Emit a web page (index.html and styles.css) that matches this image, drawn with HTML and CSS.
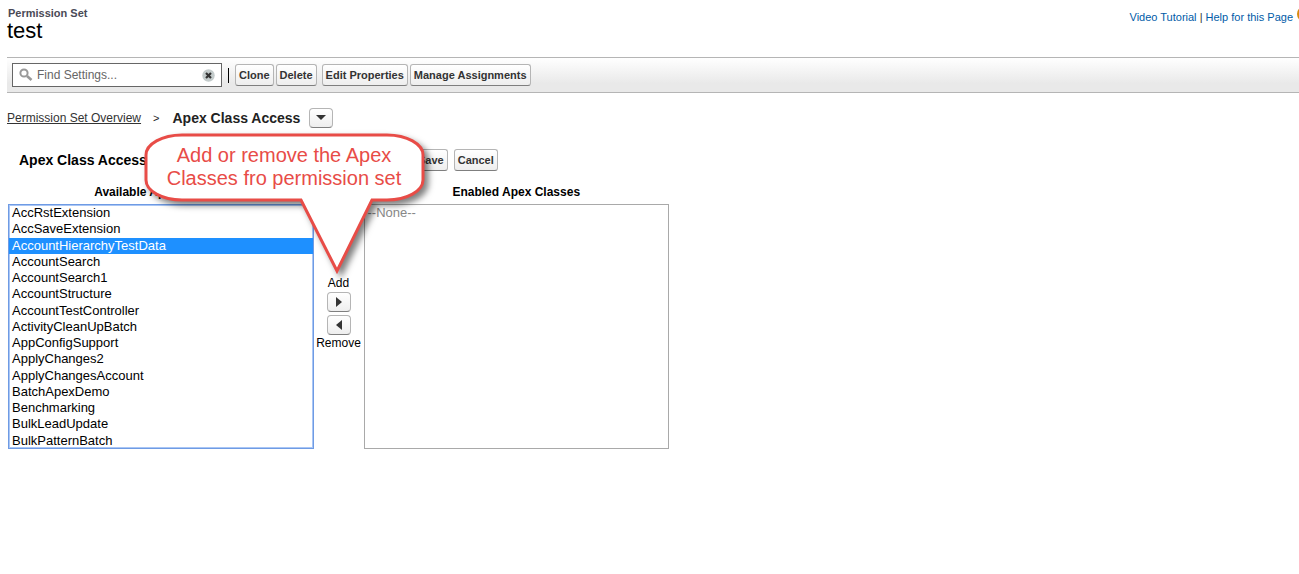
FILE: index.html
```html
<!DOCTYPE html>
<html lang="en">
<head>
    <meta charset="UTF-8">
    <meta name="viewport" content="width=device-width, initial-scale=1.0">
    <title>Permission Set: test</title>
    <link rel="stylesheet" href="styles.css">
</head>
<body>
    <header class="page-header">
        <div>
            <div class="page-type">Permission Set</div>
            <h1>test</h1>
        </div>
        <div class="help-links">
            <div><a href="#">Video Tutorial</a> | <a href="#">Help for this Page</a></div>
            <span class="help-icon"></span>
        </div>
    </header>

    <div class="toolbar">
        <div class="search">
            <svg class="search-icon" viewBox="0 0 14 14" width="14" height="14">
                <circle cx="5" cy="5" r="3.6" fill="none" stroke="#999" stroke-width="2"/>
                <path d="M8 8l4.5 4" stroke="#999" stroke-width="2.6"/>
            </svg>
            <input type="text" placeholder="Find Settings..." aria-label="Find Settings">
            <button class="clear" aria-label="Clear">
                <svg viewBox="0 0 13 13" width="13" height="13">
                    <circle cx="6.5" cy="6.5" r="6.2" fill="#c3cbcb"/>
                    <path d="M4 4l5 5M9 4l-5 5" stroke="#333" stroke-width="2.2"/>
                </svg>
            </button>
        </div>
        <span class="divider"></span>
        <div class="btn-group">
            <button class="btn">Clone</button>
            <button class="btn">Delete</button>
        </div>
        <div class="btn-group">
            <button class="btn">Edit Properties</button>
            <button class="btn">Manage Assignments</button>
        </div>
    </div>

    <nav class="breadcrumb">
        <a href="#">Permission Set Overview</a>
        <span class="arrow">&gt;</span>
        <strong>Apex Class Access</strong>
        <button class="btn-icon" aria-label="Choose section">
            <svg viewBox="0 0 12 6" width="12" height="6"><path d="M1 0h10L6 5z" fill="#333"/></svg>
        </button>
    </nav>

    <main class="editor">
        <div class="editor-head">
            <h2>Apex Class Access</h2>
            <div class="editor-buttons">
                <button class="btn">Save</button>
                <button class="btn">Cancel</button>
            </div>
        </div>

        <div class="duel">
            <div class="list">
                <label for="available">Available Apex Classes</label>
                <select id="available" class="active" size="15" multiple>
                    <option>AccRstExtension</option>
                    <option>AccSaveExtension</option>
                    <option selected>AccountHierarchyTestData</option>
                    <option>AccountSearch</option>
                    <option>AccountSearch1</option>
                    <option>AccountStructure</option>
                    <option>AccountTestController</option>
                    <option>ActivityCleanUpBatch</option>
                    <option>AppConfigSupport</option>
                    <option>ApplyChanges2</option>
                    <option>ApplyChangesAccount</option>
                    <option>BatchApexDemo</option>
                    <option>Benchmarking</option>
                    <option>BulkLeadUpdate</option>
                    <option>BulkPatternBatch</option>
                </select>
            </div>
            <div class="move">
                <label for="add">Add</label>
                <button id="add" class="btn-icon">
                    <svg viewBox="0 0 6 10" width="6" height="10"><path d="M0 0l6 5-6 5z" fill="#333"/></svg>
                </button>
                <button id="remove" class="btn-icon">
                    <svg viewBox="0 0 6 10" width="6" height="10"><path d="M6 0L0 5l6 5z" fill="#333"/></svg>
                </button>
                <label for="remove">Remove</label>
            </div>
            <div class="list">
                <label for="enabled">Enabled Apex Classes</label>
                <select id="enabled" size="15" multiple>
                    <option disabled>--None--</option>
                </select>
            </div>
        </div>

        <div class="callout">
            <svg viewBox="0 0 300 160" width="300" height="160">
                <path d="M38 2H243A36 20 0 0 1 279 22V47A36 20 0 0 1 243 67H228L193 138L157 67H38A36 20 0 0 1 2 47V22A36 20 0 0 1 38 2Z" fill="#fff" stroke="#e84c47" stroke-width="3"/>
            </svg>
            <p>Add or remove the Apex<br>Classes fro permission set</p>
        </div>
    </main>
</body>
</html>
```

FILE: styles.css
```css
body {
    margin: 0;
    padding: 7px 0 0 7px;
    background: #fff;
    color: #000;
    font-family: "Liberation Sans", Arial, sans-serif;
    font-size: 12px;
    overflow-x: hidden;
}
h1, h2, p {
    margin: 0;
    font-weight: normal;
}
button, input, select {
    box-sizing: border-box;
    font-family: inherit;
}
svg {
    display: block;
}
.page-header {
    display: flex;
    justify-content: space-between;
    height: 50px;
}
.page-type {
    padding-left: 1px;
    font-size: 11px;
    line-height: 12px;
    font-weight: bold;
    color: #4a4a56;
}
h1 {
    font-size: 22px;
    line-height: 24px;
}
.help-links {
    display: flex;
    gap: 4px;
    height: 20px;
    line-height: 20px;
    margin-right: -10px;
    font-size: 11px;
    color: #333;
}
.help-links a {
    color: #015ba7;
    text-decoration: none;
}
.help-icon {
    width: 12px;
    height: 14px;
    border-radius: 50%;
    background: #d98b0f;
}

/* toolbar */
.toolbar {
    display: flex;
    align-items: center;
    height: 34px;
    padding-left: 5px;
    border-top: 1px solid #b5b5b5;
    border-bottom: 1px solid #b5b5b5;
    background: linear-gradient(#fff, #e9e9e9 75%);
}
.search {
    display: flex;
    align-items: center;
    box-sizing: border-box;
    width: 210px;
    height: 24px;
    padding: 0 6px;
    border: 1px solid #666;
    background: #fff;
}
.search input {
    flex: 1;
    min-width: 0;
    height: 20px;
    padding: 0 4px;
    border: 0;
    outline: 0;
    font-size: 12px;
}
.search input::placeholder {
    color: #666;
}
.clear {
    padding: 0;
    border: 0;
    background: none;
}
.divider {
    width: 1px;
    height: 15px;
    margin: 0 6px;
    background: #000;
}
.btn-group {
    display: flex;
    gap: 2px;
    margin-right: 5px;
}
.btn {
    height: 22px;
    padding: 0 3px;
    border: 1px solid #b5b5b5;
    border-bottom-color: #7f7f7f;
    border-radius: 3px;
    background: linear-gradient(#fff, #eee);
    color: #333;
    font-size: 11px;
    font-weight: bold;
    white-space: nowrap;
}

/* breadcrumb */
.breadcrumb {
    display: flex;
    align-items: center;
    height: 20px;
    margin-top: 15px;
    color: #222;
}
.breadcrumb a {
    color: #333;
}
.arrow {
    margin: 0 13px 0 12px;
    font-size: 11px;
}
.breadcrumb strong {
    font-size: 14px;
}
.btn-icon {
    display: flex;
    align-items: center;
    justify-content: center;
    width: 24px;
    height: 20px;
    padding: 0;
    border: 1px solid #b5b5b5;
    border-bottom-color: #7f7f7f;
    border-radius: 4px;
    background: linear-gradient(#fff, #eee);
}
.breadcrumb .btn-icon {
    margin-left: 9px;
}

/* class picker */
.editor {
    position: relative;
    max-width: 662px;
    margin-top: 21px;
}
.editor-head {
    display: grid;
    grid-template-columns: 399px 1fr;
    align-items: center;
    height: 22px;
}
h2 {
    padding-left: 12px;
    font-size: 14px;
    font-weight: bold;
}
.editor-buttons {
    display: flex;
    gap: 6px;
    padding-left: 8px;
}
.duel {
    display: grid;
    grid-template-columns: 1fr 50px 1fr;
    margin: 12px 0 0 1px;
}
.list label {
    display: block;
    height: 21px;
    line-height: 18px;
    text-align: center;
    font-weight: bold;
}
.list select {
    display: block;
    width: 100%;
    height: 245px;
    padding: 0;
    border: 1px solid #a9a9a9;
    border-radius: 0;
    background: #fff;
    font-size: 13px;
    overflow: hidden;
}
.list option {
    min-height: 1.25em;
    padding: 0 3px;
    line-height: 14px;
}
.list option:checked {
    background: linear-gradient(#1e90ff, #1e90ff);
    -webkit-text-fill-color: #fff;
}
.list option:disabled {
    color: #888;
}
.list .active {
    border-color: #6f9be4;
    box-shadow: inset 0 0 0 1px #a9c6f5;
}
.move {
    display: flex;
    flex-direction: column;
    align-items: center;
    gap: 3px;
    padding-top: 95px;
}
.move label {
    line-height: 11px;
}

/* callout over the lists */
.callout {
    position: absolute;
    left: 137px;
    top: -16px;
    pointer-events: none;
}
.callout svg {
    filter: drop-shadow(4px 4px 3px rgba(0, 0, 0, 0.5));
}
.callout p {
    position: absolute;
    left: 0;
    top: 11px;
    width: 280px;
    text-align: center;
    font-size: 20px;
    line-height: 23px;
    color: #e84c47;
}
```
